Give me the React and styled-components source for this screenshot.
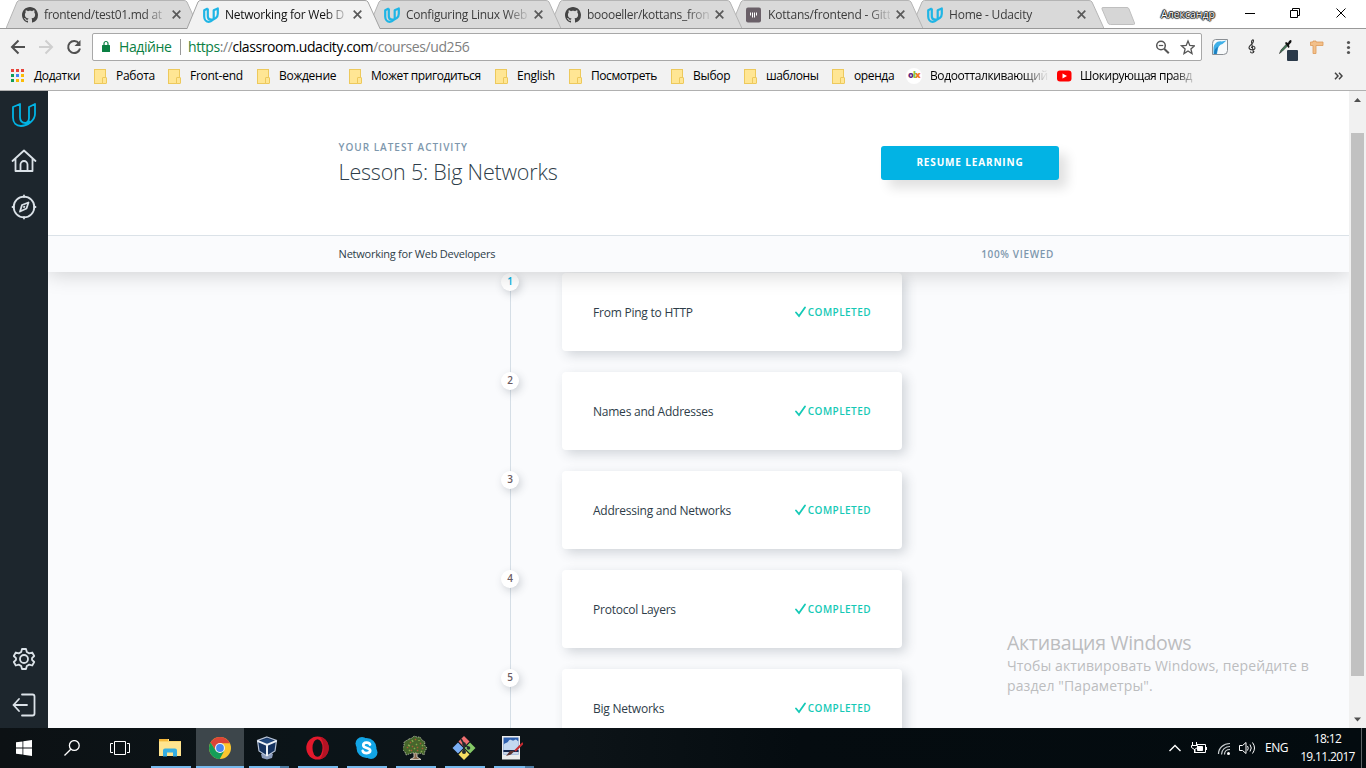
import React from "react";
import styled, { createGlobalStyle, css } from "styled-components";

const GlobalStyle = createGlobalStyle`
  * { box-sizing: border-box; }
  html, body { margin: 0; padding: 0; overflow: hidden; }
  body { font-family: "Open Sans", "Noto Sans", sans-serif; font-size: 12px; color: #000; }
  svg { display: block; flex: none; }
`;

const Screen = styled.div`
  width: 1366px;
  height: 768px;
  display: flex;
  flex-direction: column;
  overflow: hidden;
  background: #fff;
`;

/* ---------- Tab strip ---------- */

const TabStrip = styled.div`
  display: flex;
  height: 29px;
  padding-left: 6px;
  background: linear-gradient(#fff 28px, #999 28px);
`;

const TabBox = styled.div`
  position: relative;
  z-index: ${(p) => p.$z};
  width: 193px;
  height: 29px;
  margin-right: -12px;
  flex: none;
  display: flex;
  align-items: center;
  padding: 0 16px 0 16px;
`;

const TabShape = styled.svg`
  position: absolute;
  inset: 0;
`;

const TabTitle = styled.span`
  position: relative;
  width: 122px;
  margin-left: 6px;
  white-space: nowrap;
  line-height: 18px;
  color: ${(p) => (p.$active ? "#111" : "#3c3c3c")};
  letter-spacing: ${(p) => p.$ls}px;
  -webkit-mask-image: linear-gradient(90deg, #000 100px, rgba(0, 0, 0, 0.2) 120px);
  mask-image: linear-gradient(90deg, #000 100px, rgba(0, 0, 0, 0.2) 120px);
`;

const TabIcon = styled.div`
  position: relative;
  width: 16px;
  height: 16px;
`;

const TabClose = styled.svg`
  position: relative;
  margin-left: 6px;
`;

const NewTab = styled.svg`
  margin: 6px 0 0 6px;
`;

const ProfileName = styled.div`
  margin-left: 14px;
  width: 56px;
  height: 29px;
  line-height: 28px;
  font-size: 10.5px;
  letter-spacing: 0;
  padding-left: 1px;
  white-space: nowrap;
  color: #fff;
  text-shadow: 0 0 1px #000, 0 0 1px #000, 1px 0 1px #333, -1px 0 1px #333, 0 1px 1px #333, 0 -1px 1px #333;
`;

const WindowButtons = styled.svg`
  margin-left: 29px;
`;

/* ---------- Toolbar ---------- */

const Toolbar = styled.div`
  display: flex;
  align-items: center;
  height: 33px;
  background: #f2f2f2;
  padding: 3px 0 0 8px;
`;

const NavIcons = styled.svg`
  margin-right: 8px;
`;

const Omnibox = styled.div`
  width: 1110px;
  height: 28px;
  display: flex;
  align-items: center;
  padding: 0 6px 0 8px;
  background: #fff;
  border: 1px solid #a8a8a8;
  border-radius: 2px;
  font-size: 14px;
  white-space: nowrap;
`;

const Secure = styled.span`
  width: 53px;
  margin: -1px 0 0 8px;
  color: #0b8043;
  letter-spacing: -0.4px;
`;

const Divider = styled.span`
  width: 1px;
  height: 16px;
  margin: 0 7px 0 8px;
  background: #999;
`;

const Url = styled.span`
  flex: 1;
  margin-top: -1px;
  color: #808080;
  letter-spacing: -0.42px;
  b { font-weight: 400; color: #000; }
  i { font-style: normal; color: #0b8043; }
`;

/* ---------- Bookmarks ---------- */

const BookmarkBar = styled.div`
  display: flex;
  height: 29px;
  padding-left: 10px;
  background: #f2f2f2;
  border-bottom: 1px solid #b0b0b0;
`;

const BookmarkItem = styled.div`
  width: ${(p) => p.$w}px;
  flex: none;
  display: flex;
  align-items: center;
  height: 28px;
  white-space: nowrap;
  letter-spacing: ${(p) => p.$ls}px;
`;

const BookmarkLabel = styled.span`
  margin: -2px 0 0 ${(p) => p.$gap}px;
  ${(p) =>
    p.$fade &&
    css`
      width: 118px;
      -webkit-mask-image: linear-gradient(90deg, #000 94px, rgba(0, 0, 0, 0.1) 115px);
      mask-image: linear-gradient(90deg, #000 94px, rgba(0, 0, 0, 0.1) 115px);
    `}
`;

const FolderShape = styled.span`
  width: 12px;
  height: 15px;
  background: #ffe694;
  border: 1px solid #edc95c;
  display: flex;
  align-items: flex-end;
  justify-content: flex-end;
  &::after {
    content: "";
    width: 3px;
    height: 5px;
    border: 1px solid #edc95c;
    border-radius: 1px;
    background: #ffe694;
    margin: 0 -2px -1px 0;
  }
`;

const OlxBadge = styled.span`
  width: 16px;
  height: 16px;
  border-radius: 8px;
  background: #fff;
  color: #5b2a83;
  font: 800 9px/14px "Open Sans", sans-serif;
  letter-spacing: -0.8px;
  text-align: center;
  b { color: #8dc63f; font-weight: 800; }
  i { color: #f47b20; font-style: normal; }
`;

/* ---------- Page ---------- */

const Viewport = styled.div`
  display: flex;
  height: 637px;
`;

const Sidebar = styled.nav`
  width: 48px;
  background: #1d262d;
  display: flex;
  flex-direction: column;
  align-items: center;
  padding: 10px 0 9px;
`;

const SideIcon = styled.svg`
  width: 28px;
  height: 28px;
  margin-bottom: ${(p) => p.$mb || 0}px;
  fill: none;
  stroke: ${(p) => p.$color || "#dbe2e8"};
  stroke-width: 1.8;
  stroke-linejoin: round;
  stroke-linecap: round;
`;

const Spacer = styled.div`
  flex: 1;
`;

const Page = styled.main`
  position: relative;
  width: 1301px;
  height: 637px;
  background: #fafbfd;
  overflow: hidden;
`;

const Header = styled.header`
  position: relative;
  z-index: 2;
  box-shadow: 0 2px 20px rgba(0, 0, 0, 0.18);
`;

const HeaderTop = styled.div`
  display: flex;
  justify-content: space-between;
  height: 145px;
  padding: 49px 290px 0 290.6px;
  background: #fff;
  border-bottom: 1px solid #dbe2e8;
`;

const Overline = styled.div`
  height: 15px;
  line-height: 15px;
  font-size: 10px;
  font-weight: 600;
  letter-spacing: 0.98px;
  color: #7d97ad;
`;

const Title = styled.h1`
  margin: 2px 0 0;
  font-size: 21.5px;
  line-height: 30px;
  font-weight: 300;
  letter-spacing: -0.2px;
  color: #2e3d49;
`;

const ResumeButton = styled.button`
  width: 178px;
  height: 34px;
  margin-top: 6px;
  padding: 0 0 2px;
  border: 0;
  border-radius: 3px;
  background: #02b3e4;
  color: #fff;
  font: 700 10px "Open Sans", sans-serif;
  letter-spacing: 0.85px;
  box-shadow: 8px 8px 12px rgba(0, 0, 0, 0.12);
`;

const HeaderSub = styled.div`
  display: flex;
  justify-content: space-between;
  align-items: center;
  height: 36px;
  padding: 0 295px 1px 290.6px;
  background: #fafbfd;
  color: #2e3d49;
  font-size: 11px;
`;

const CourseName = styled.span`
  letter-spacing: -0.24px;
`;

const Viewed = styled.span`
  font-size: 10px;
  font-weight: 600;
  letter-spacing: 0.65px;
  color: #7d97ad;
`;

const LessonList = styled.div`
  margin-top: 1px;
`;

const LessonRow = styled.div`
  display: flex;
  height: 99px;
  padding-left: 453px;
  align-items: flex-start;
`;

const Marker = styled.div`
  width: 18px;
  height: 99px;
  margin-right: 43px;
  background: linear-gradient(#d5dee6, #d5dee6) 9px 0 / 1px 99px no-repeat;
`;

const Bullet = styled.div`
  width: 18px;
  height: 18px;
  border-radius: 50%;
  background: #fff;
  box-shadow: 2px 3px 8px rgba(46, 61, 73, 0.22);
  color: ${(p) => (p.$active ? "#02b3e4" : "#6b5b62")};
  font-size: 10px;
  font-weight: 600;
  line-height: 17px;
  text-align: center;
`;

const Card = styled.div`
  width: 340px;
  height: 78px;
  display: flex;
  align-items: center;
  justify-content: space-between;
  padding: 0 31px;
  border-radius: 4px;
  background: #fff;
  box-shadow: 4px 4px 12px rgba(46, 61, 73, 0.2);
`;

const LessonName = styled.span`
  color: #2e3d49;
  font-size: 12px;
  letter-spacing: -0.23px;
`;

const Completed = styled.span`
  display: flex;
  align-items: center;
  gap: 2px;
  color: #15c9b6;
  font-size: 10px;
  font-weight: 600;
  letter-spacing: 0.45px;
`;

const Activation = styled.div`
  position: absolute;
  left: 959px;
  top: 540px;
  z-index: 3;
  color: #bcbdbf;
  font-size: 14px;
  line-height: 20px;
  letter-spacing: 0.1px;
  white-space: nowrap;
`;

const ActivationTitle = styled.div`
  font-size: 19.5px;
  line-height: 24px;
  margin-bottom: 1px;
  letter-spacing: -0.3px;
`;

const ScrollTrack = styled.div`
  width: 17px;
  background: #f1f1f1;
  display: flex;
  flex-direction: column;
  align-items: center;
`;

const ScrollThumb = styled.div`
  width: 13px;
  height: 543px;
  margin: 25px 2px auto 2px;
  background: #c1c1c1;
`;

/* ---------- Taskbar ---------- */

const Taskbar = styled.footer`
  display: flex;
  height: 40px;
  background: linear-gradient(90deg, #0c1114 0, #0b1418 300px, #0d1418 560px, #050c10 800px, #030b0f 100%);
  color: #fff;
`;

const TaskButton = styled.div`
  width: ${(p) => p.$w || 48}px;
  height: 40px;
  flex: none;
  display: flex;
  align-items: center;
  justify-content: center;
  background: ${(p) => (p.$active ? "#3d464b" : "transparent")};
`;

const AppButton = styled(TaskButton)`
  position: relative;
  padding-right: ${(p) => p.$shift || 0}px;
  &::after {
    content: "";
    position: absolute;
    left: ${(p) => (p.$active ? 0 : p.$left || 5)}px;
    right: ${(p) => (p.$active ? 0 : p.$right || 4)}px;
    bottom: 0;
    height: 2px;
    background: ${(p) =>
      p.$multi ? "linear-gradient(90deg, #76b9ed 31px, #4d7ca3 31px)" : "#76b9ed"};
  }
`;

const Tray = styled.div`
  margin-left: auto;
  display: flex;
  align-items: center;
`;

const Lang = styled.span`
  width: 24px;
  margin: -1px -1px 0 9px;
  letter-spacing: -0.5px;
`;

const Clock = styled.div`
  width: 68px;
  margin-left: 5px;
  padding-left: 1px;
  text-align: center;
  font-size: 12px;
  line-height: 18px;
  letter-spacing: -0.65px;
`;

const ShowDesktop = styled.div`
  width: 5px;
  height: 40px;
  border-left: 1px solid #5d6366;
`;

/* ---------- Icons ---------- */

const GithubIcon = () => (
  <svg width="16" height="16" viewBox="0 0 16 16" fill="#444">
    <path d="M8 0C3.58 0 0 3.58 0 8c0 3.54 2.29 6.53 5.47 7.59.4.07.55-.17.55-.38 0-.19-.01-.82-.01-1.49-2.01.37-2.53-.49-2.69-.94-.09-.23-.48-.94-.82-1.13-.28-.15-.68-.52-.01-.53.63-.01 1.08.58 1.23.82.72 1.21 1.87.87 2.33.66.07-.52.28-.87.51-1.07-1.78-.2-3.64-.89-3.64-3.95 0-.87.31-1.59.82-2.15-.08-.2-.36-1.02.08-2.12 0 0 .67-.21 2.2.82.64-.18 1.32-.27 2-.27s1.36.09 2 .27c1.53-1.04 2.2-.82 2.2-.82.44 1.1.16 1.92.08 2.12.51.56.82 1.27.82 2.15 0 3.07-1.87 3.75-3.65 3.95.29.25.54.73.54 1.48 0 1.07-.01 1.93-.01 2.2 0 .21.15.46.55.38A8.01 8.01 0 0 0 16 8c0-4.42-3.58-8-8-8z" />
  </svg>
);

const UdacityIcon = () => (
  <svg width="16" height="16" viewBox="0 0 16 16" fill="none" stroke="#1fb5e5" strokeWidth="2.2" strokeLinejoin="round">
    <path d="M4.8 1.4 1.2 3.2v6.3c0 3 2 5.3 4.6 5.3 1.7 0 3-1 4.2-2.1" />
    <path d="M4.8 1.4v7.8c0 2 1.3 3.5 3.5 3.5 3.5 0 6.5-2.6 6.5-6V1.4L10.7 3.2v9" />
  </svg>
);

const GitterIcon = () => (
  <svg width="16" height="16" viewBox="0 0 16 16">
    <rect x="0" y="0.5" width="15" height="15" rx="2" fill="#6a6068" />
    <path d="M4.5 5.5v3M6.500 5.500v5M8.500 5.500v5M10.500 5.500v3" stroke="#fff" strokeWidth="1" />
  </svg>
);

const tabIcons = { github: GithubIcon, udacity: UdacityIcon, gitter: GitterIcon };

function Tab({ icon, title, active, z, ls }) {
  const Icon = tabIcons[icon];
  return (
    <TabBox $z={z}>
      <TabShape width="193" height="29">
        <path d="M0 29 L11 2 Q12 .5 13.500 .5 H178 Q180 .5 181 2 L193 29Z" fill={active ? "#f2f2f2" : "#d9d9d9"} />
        <path d="M0 28.500 L11 2 Q12 .5 13.500 .5 H178 Q180 .5 181 2 L193 28.500" fill="none" stroke={active ? "#a3a3a3" : "#b4b4b4"} />
        {!active && <path d="M0 28.500H193" stroke="#999" />}
      </TabShape>
      <TabIcon><Icon /></TabIcon>
      <TabTitle $active={active} $ls={ls}>{title}</TabTitle>
      <TabClose width="9" height="9" viewBox="0 0 9 9" stroke="#5a5a5a" strokeWidth="1.700">
        <path d="M.7 .7 8.300 8.300M8.300 .7 .7 8.300" />
      </TabClose>
    </TabBox>
  );
}

const tabs = [
  { icon: "github", title: "frontend/test01.md at", ls: -0.3 },
  { icon: "udacity", title: "Networking for Web D", active: true, ls: -0.25 },
  { icon: "udacity", title: "Configuring Linux Web", ls: -0.26 },
  { icon: "github", title: "boooeller/kottans_fron", ls: -0.28 },
  { icon: "gitter", title: "Kottans/frontend - Gitt", ls: -0.18 },
  { icon: "udacity", title: "Home - Udacity", ls: -0.2 },
];

const folders = [
  { label: "Работа", w: 74 },
  { label: "Front-end", w: 89 },
  { label: "Вождение", w: 92 },
  { label: "Может пригодиться", w: 146, ls: -0.42 },
  { label: "English", w: 74 },
  { label: "Посмотреть", w: 102, ls: -0.42 },
  { label: "Выбор", w: 73 },
  { label: "шаблоны", w: 88, ls: -0.42 },
  { label: "оренда", w: 74, ls: -0.38 },
];

const lessons = ["From Ping to HTTP", "Names and Addresses", "Addressing and Networks", "Protocol Layers", "Big Networks"];

const Extensions = () => (
  <svg width="164" height="28" viewBox="1202 33 164 28">
    <path d="M1215.500 39.500h12v11q0 4-4 4h-11v-11q0-4 3-4z" fill="#f8fafb" stroke="#8a8f94" />
    <path d="M1213.500 54v-5c0-5 4-8.500 8-7.500l5-1-4 3.500c-3 .5-4.500 3-5 7l-.5 3z" fill="#3fb0e8" />
    <path d="M1214 54c0-4 1.500-6 4-7.500l-1.500 7.500z" fill="#1c7fc0" />
    <path d="M1254 51c0 2.500-3.500 2.500-3.500.5M1253.300 52 1251.500 42c0-2 2-3 2-1 0 3-4.500 4-4.500 6.500 0 3 6 3 6 .5 0-2-3.500-2.500-3.500 0" fill="none" stroke="#333" strokeWidth="1.100" />
    <path d="m1279.500 53.500 1.500-3.500 5.500-6 1.500 1.500-5.500 5.500z" fill="#3d7a55" stroke="#333" strokeWidth=".7" />
    <path d="m1285 43 1-1 2 1c1-3 3.500-4 3.500-2s-1 2-2.500 4l.5 2-1 1z" fill="#111" />
    <rect x="1287" y="50" width="11" height="11" rx="1" fill="#2b3a4a" />
    <path d="M1310.500 42h2.500v-1h3v1h7v3.500h-7v8h-3v-8h-2.500z" fill="#f3c08a" stroke="#dc9a58" strokeWidth=".8" />
    <g fill="#555">
      <circle cx="1348.500" cy="42.500" r="1.600" />
      <circle cx="1348.500" cy="47.500" r="1.600" />
      <circle cx="1348.500" cy="52.500" r="1.600" />
    </g>
  </svg>
);

const Explorer = () => (
  <svg width="22" height="20" viewBox="0 0 22 20">
    <path d="M0 1h10v2h12v15H0z" fill="#ffe48f" />
    <path d="M0 1h9v2H0z" fill="#f4b73b" />
    <path d="M0 3h22v1H0z" fill="#fbd56b" />
    <path d="M4 18.500v-6q0-2 2-2h10q2 0 2 2v6h-4v-4H8v4z" fill="#35aee2" />
  </svg>
);

const Chrome = () => (
  <svg width="22" height="22" viewBox="0 0 22 22">
    <circle cx="11" cy="11" r="11" fill="#fbc62f" />
    <path d="M1.500 5.500A11 11 0 0 1 20.500 5.500L20.900 6.300H11L6.700 13.300z" fill="#dc4437" />
    <path d="M1.500 5.500A11 11 0 0 0 10.800 22l4.500-8.200L11 15.700 6.700 13.500z" fill="#149d58" />
    <circle cx="11" cy="11" r="5" fill="#f4f6f8" />
    <circle cx="11" cy="11" r="3.900" fill="#4787f0" />
  </svg>
);

const VirtualBox = () => (
  <svg width="22" height="24" viewBox="0 0 22 24">
    <path d="m5 18 6-3 6 3-1 4-5 1.500-5-1.500z" fill="#8c9dbc" />
    <path d="M11 1 20.500 4.500 19 15 11 20 3 15 1.500 4.500z" fill="#16335f" stroke="#b9c5d8" strokeWidth="1.200" />
    <path d="M11 2.500 18 5 11 8 4 5z" fill="#21487d" />
    <path d="M1.500 4.800 11 9 20.500 4.800M11 9v11" fill="none" stroke="#eef2f7" strokeWidth="2" />
  </svg>
);

const Opera = () => (
  <svg width="23" height="24" viewBox="0 0 23 24">
    <ellipse cx="11.500" cy="12" rx="11.200" ry="11.500" fill="#e3192c" />
    <path d="M14 .8C20 2 22.700 7 22.700 12s-2.700 10-8.700 11.200c2.500-3 3.500-7 3.500-11.200s-1-8-3.500-11.200z" fill="#b31324" />
    <ellipse cx="11.500" cy="12" rx="5" ry="8.800" fill="#0c1519" />
  </svg>
);

const Skype = () => (
  <svg width="23" height="24" viewBox="0 0 23 24">
    <circle cx="7" cy="7.500" r="6.500" fill="#12a5e6" />
    <circle cx="16" cy="16.500" r="6.500" fill="#12a5e6" />
    <circle cx="11.500" cy="12" r="10" fill="#12a5e6" />
    <path d="M15 8.500C14 5.800 8.300 6 8.300 9.200c0 3.500 6.900 2 6.900 5.400 0 3.200-6.500 3.300-7.500.2" fill="none" stroke="#fff" strokeWidth="2.700" strokeLinecap="round" />
  </svg>
);

const Tree = () => (
  <svg width="25" height="26" viewBox="0 0 25 26">
    <path d="M11 15h3v7l4 2.500H7l4-2z" fill="#8b6b50" stroke="#e9e2d8" strokeWidth=".8" />
    <path d="m6 4 3-1 2-2 3 1 3 0 2 3 3 2-.5 3 2.500 3-2 3-1 4-3-2-2 1-3-1-4 0-3 1-3 1-1-3-3-3 2-3 0-4z" fill="#46662c" stroke="#d5dac4" strokeWidth=".7" strokeDasharray="1.500 1" />
    <path d="m7 7 1 1m4-4 1 1m4 3 1 1M4 12l1 1m4-2 1 1m4 0 1 1m4 0 1 1M8 15l1 1m5 0 1-1" stroke="#a85a38" strokeWidth="1.500" />
    <path d="m9 5 1 2m6-2 0 1M5 10l2 1m6-2 1 1m5 0 1 1m-9 2 1 1m-6 1 1 1m11 0 1 1" stroke="#86a94c" strokeWidth="1.500" />
  </svg>
);

const GitIcon = () => (
  <svg width="24" height="24" viewBox="0 0 24 24">
    <path d="m12 0 5.500 5.500L12 11 6.500 5.500z" fill="#ef6f70" />
    <path d="m6 6.500 5.500 5.500L6 17.500.5 12z" fill="#7aaef4" />
    <path d="m18 6.500 5.500 5.500-5.500 5.500-5.500-5.500z" fill="#85c966" />
    <path d="m12 13 5.500 5.500L12 24l-5.500-5.500z" fill="#f5dd62" />
    <path d="m9 3 3 5v8M12 8l5 4" stroke="#222b2e" strokeWidth="1.600" fill="none" />
    <circle cx="12" cy="8" r="1.800" fill="#222b2e" />
    <circle cx="12" cy="16" r="2" fill="#222b2e" />
    <circle cx="16.500" cy="12" r="1.800" fill="#222b2e" />
  </svg>
);

const PaintIcon = () => (
  <svg width="22" height="24" viewBox="0 0 22 24">
    <path d="M1 0h18v23.500H1z" fill="#ececec" />
    <path d="M2.500 1.500h15v17h-15z" fill="#2d5fae" />
    <path d="M2.500 9c2-3 3-1 5-4s4 1 6-1 3 2 4 1v9h-15z" fill="#c3d8f1" />
    <path d="M2.500 14h15v2h-15z" fill="#14254b" />
    <path d="M2.500 16h15v2.500h-15z" fill="#c9d6e8" />
    <path d="m22 7-8 8" stroke="#c52a30" strokeWidth="2" />
    <path d="m14 14.500-4 4-5 1.500 4-5z" fill="#5d3430" />
  </svg>
);

export default function App() {
  return (
    <Screen>
      <GlobalStyle />
      <TabStrip>
        {tabs.map((t, i) => (
          <Tab key={t.title} {...t} z={t.active ? 10 : 9 - i} />
        ))}
        <NewTab width="48" height="20" viewBox="1098 6 48 20">
          <path d="M1103 7.500h24q1.500 0 2 1.500l5.500 14q.5 1.500-1 1.500h-23q-2 0-2.500-1.500l-6-14q-.5-1.500 1-1.500z" fill="#d6d6d6" stroke="#bfbfbf" />
        </NewTab>
        <ProfileName>Александр</ProfileName>
        <WindowButtons width="104" height="28" viewBox="1245 0 104 28" fill="none" stroke="#000">
          <path d="M1245 13.500h10" />
          <path d="M1290.500 10.500h7v7h-7zM1292.500 10.500v-2h7v7h-2" />
          <path d="m1336.500 8.500 9 9m0-9-9 9" />
        </WindowButtons>
      </TabStrip>

      <Toolbar>
        <NavIcons width="76" height="28" viewBox="8 33 76 28" fill="none" strokeWidth="2">
          <path d="M25 47H12.500M18.500 40.500 12 47l6.500 6.500" stroke="#505050" />
          <path d="M39 47H51.500M45.500 40.500 52 47l-6.500 6.500" stroke="#cfcfcf" />
          <path d="M79 43.500A6 6 0 1 0 80 48.500" stroke="#505050" />
          <path d="M80.500 40v6h-6z" fill="#505050" />
        </NavIcons>
        <Omnibox>
          <svg width="10" height="14" viewBox="0 0 10 14">
            <path d="M1.500 5h7q.5 0 .5.500v6q0 .5-.5.500h-7q-.5 0-.5-.5v-6q0-.5.5-.5z" fill="#0b8043" />
            <path d="M3 6V3.500a2 2 0 0 1 4 0V6" stroke="#0b8043" strokeWidth="1.200" fill="none" />
          </svg>
          <Secure>Надійне</Secure>
          <Divider />
          <Url><i>https</i>://<b>classroom.udacity.com</b>/courses/ud256</Url>
          <svg width="40" height="18" viewBox="1155 38 40 18" fill="none" stroke="#555" strokeWidth="1.500">
            <circle cx="1161" cy="45.500" r="4.300" />
            <path d="m1164.200 48.700 4.600 4.600" strokeWidth="2" />
            <path d="M1158.800 45.500h4.400" strokeWidth="1.200" />
            <path d="m1188 41 1.800 4.400 4.700.4-3.600 3.100 1.100 4.600-4-2.500-4 2.500 1.100-4.600-3.600-3.100 4.700-.4z" strokeWidth="1.300" />
          </svg>
        </Omnibox>
        <Extensions />
      </Toolbar>

      <BookmarkBar>
        <BookmarkItem $w={84} $ls={-0.35}>
          <svg width="14" height="14" viewBox="0 0 14 14">
            {["#e8453c", "#e8453c", "#e8453c", "#109d58", "#4285f4", "#fbbc05", "#109d58", "#fbbc05", "#fbbc05"].map((c, i) => (
              <rect key={i} x={1 + (i % 3) * 5} y={Math.floor(i / 3) * 5} width="3" height="3" fill={c} />
            ))}
          </svg>
          <BookmarkLabel $gap={10}>Додатки</BookmarkLabel>
        </BookmarkItem>
        {folders.map((f) => (
          <BookmarkItem key={f.label} $w={f.w} $ls={f.ls || -0.27}>
            <FolderShape />
            <BookmarkLabel $gap={10}>{f.label}</BookmarkLabel>
          </BookmarkItem>
        ))}
        <BookmarkItem $w={151} $ls={-0.4}>
          <OlxBadge>o<b>l</b><i>x</i></OlxBadge>
          <BookmarkLabel $gap={8} $fade>Водоотталкивающий</BookmarkLabel>
        </BookmarkItem>
        <BookmarkItem $w={277} $ls={-0.45}>
          <svg width="15" height="12" viewBox="0 0 15 12">
            <rect y=".5" width="14.500" height="11" rx="3" fill="#f00" />
            <path d="m5.500 3.500 4.500 2.500-4.500 2.500z" fill="#fff" />
          </svg>
          <BookmarkLabel $gap={8} $fade>Шокирующая правд</BookmarkLabel>
        </BookmarkItem>
        <BookmarkItem $w={20} $ls={0}>
          <svg width="9" height="8" viewBox="0 0 9 8" fill="none" stroke="#444" strokeWidth="1.500">
            <path d="m1 .8 3 3.200-3 3.200M5 .8 8 4 5 7.200" />
          </svg>
        </BookmarkItem>
      </BookmarkBar>

      <Viewport>
        <Sidebar>
          <SideIcon viewBox="0 0 28 28" $color="#02b3e4" $mb={18}>
            <path d="M10 3 3 6v10.500c0 5.500 3.500 8.500 8 8.500 6 0 14-5.500 14-12V3l-6 3v11c0 3-2 5-3.500 5-3.500 0-5.500-2-5.500-6z" />
            <path d="M15.500 22c1.500 0 2.500-.5 4-1.500" />
          </SideIcon>
          <SideIcon viewBox="0 0 28 28" $mb={18}>
            <path d="M2.500 14 14 3.500 25.500 14M5.500 11.500v12.500h17V11.500M10.500 24v-6.500a3.500 3.500 0 0 1 7 0V24" />
          </SideIcon>
          <SideIcon viewBox="0 0 28 28">
            <circle cx="14" cy="14" r="10.300" />
            <path d="M14 2.500v1.500M14 24v1.500M2.500 14h1.500M24 14h1.500" />
            <path d="m18.500 9.500-2 6-6.500 3 2-6.500zM14 14l.4-.4" />
          </SideIcon>
          <Spacer />
          <SideIcon viewBox="0 0 28 28" $mb={18}>
            <circle cx="14" cy="14" r="4" />
            <path d="M12 4h4l.8 3 2.400 1.400 3-.9 2 3.500-2.200 2.200v1.600l2.200 2.200-2 3.500-3-.9-2.400 1.400-.8 3h-4l-.8-3-2.400-1.400-3 .9-2-3.500L6 14.800v-1.600L3.800 11l2-3.500 3 .9L11.200 7z" />
          </SideIcon>
          <SideIcon viewBox="0 0 28 28">
            <path d="M12 3.500h10.500q2 0 2 2v17q0 2-2 2H12M17 14H3.500M9 8l-5.500 6L9 20" />
          </SideIcon>
        </Sidebar>

        <Page>
          <Header>
            <HeaderTop>
              <div>
                <Overline>YOUR LATEST ACTIVITY</Overline>
                <Title>Lesson 5: Big Networks</Title>
              </div>
              <ResumeButton>RESUME LEARNING</ResumeButton>
            </HeaderTop>
            <HeaderSub>
              <CourseName>Networking for Web Developers</CourseName>
              <Viewed>100% VIEWED</Viewed>
            </HeaderSub>
          </Header>
          <LessonList>
            {lessons.map((name, i) => (
              <LessonRow key={name}>
                <Marker>
                  <Bullet $active={i === 0}>{i + 1}</Bullet>
                </Marker>
                <Card>
                  <LessonName>{name}</LessonName>
                  <Completed>
                    <svg width="11" height="12" viewBox="0 0 11 12" fill="none" stroke="#15c9b6" strokeWidth="1.800" strokeLinecap="round">
                      <path d="m1 6.500 3 3.500L10 1.500" />
                    </svg>
                    COMPLETED
                  </Completed>
                </Card>
              </LessonRow>
            ))}
          </LessonList>
          <Activation>
            <ActivationTitle>Активация Windows</ActivationTitle>
            <div>Чтобы активировать Windows, перейдите в</div>
            <div>раздел "Параметры".</div>
          </Activation>
        </Page>

        <ScrollTrack>
          <svg width="17" height="17" viewBox="0 0 17 17"><path d="m5 11 3.500-4 3.500 4z" fill="#505050" /></svg>
          <ScrollThumb />
          <svg width="17" height="17" viewBox="0 0 17 17"><path d="m5 6.500 3.500 4 3.500-4z" fill="#505050" /></svg>
        </ScrollTrack>
      </Viewport>

      <Taskbar>
        <TaskButton>
          <svg width="16" height="16" viewBox="0 0 16 16" fill="#fff">
            <path d="M0 2.300 6.500 1.400v6.200H0zM7.300 1.300 16 0v7.600H7.300zM0 8.400h6.500v6.200L0 13.700zM7.300 8.400H16V16l-8.700-1.300z" />
          </svg>
        </TaskButton>
        <TaskButton>
          <svg width="16" height="16" viewBox="0 0 16 16" fill="none" stroke="#fff" strokeWidth="1.300">
            <circle cx="10.300" cy="5.500" r="4.900" /><path d="M6.800 9.200.5 15.500" />
          </svg>
        </TaskButton>
        <TaskButton>
          <svg width="20" height="16" viewBox="0 0 20 16" fill="none" stroke="#fff">
            <path d="M4.500 1.500h11v13h-11zM3 3.500H.5v9H3M17 3.500h2.500v9H17" />
          </svg>
        </TaskButton>
        <AppButton $w={52} $left={7} $right={5}><Explorer /></AppButton>
        <AppButton $active><Chrome /></AppButton>
        <AppButton $w={49} $multi $shift={3}><VirtualBox /></AppButton>
        <AppButton $w={49}><Opera /></AppButton>
        <AppButton $w={49}><Skype /></AppButton>
        <AppButton $w={49}><Tree /></AppButton>
        <AppButton $w={49} $shift={1}><GitIcon /></AppButton>
        <AppButton $w={49} $multi $shift={3}><PaintIcon /></AppButton>
        <Tray>
          <svg width="90" height="24" viewBox="1166 736 90 24" fill="none" stroke="#fff">
            <path d="m1169.500 751 5.500-5.500 5.500 5.500" strokeWidth="1.400" />
            <path d="M1197 744.500h8.500v8H1195v-3M1206.500 747v3" />
            <path d="M1197.500 746.500h5v4h-5z" fill="#fff" />
            <path d="M1192.500 742v3M1196.500 742v3M1191.500 745.500h6v2l-3 2-3-2zM1194.500 749v4" />
            <g stroke="#c9ced0" strokeWidth="1.200">
              <path d="M1218.500 754c0-6 5-10.500 11.500-10.500M1221.500 754.500c0-5 4-8 8.500-8M1224.500 754.500c0-3.500 2.500-5 5.500-5" />
            </g>
            <circle cx="1228.500" cy="753.500" r="1.500" fill="#fff" stroke="none" />
            <path d="M1239.500 745.500h3l3.500-3v11l-3.500-3h-3zM1247.500 746q1.500 2 0 4.500M1250 744.500q2.500 3.500 0 7M1252.500 742.500q4 5.500 0 11" />
          </svg>
          <Lang>ENG</Lang>
          <Clock>
            <div>18:12</div>
            <div>19.11.2017</div>
          </Clock>
          <ShowDesktop />
        </Tray>
      </Taskbar>
    </Screen>
  );
}
